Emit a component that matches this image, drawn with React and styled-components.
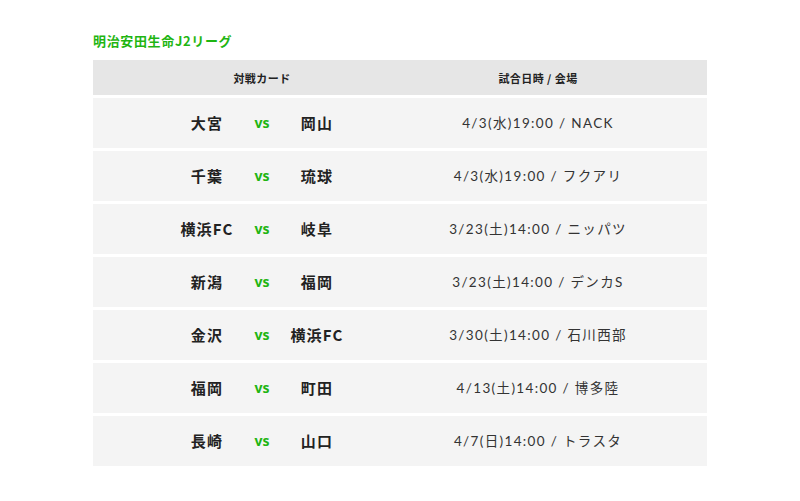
import React from 'react'
import styled, { createGlobalStyle } from 'styled-components'

const matches = [
  { home: '大宮', away: '岡山', date: '4/3(水)19:00', venue: 'NACK' },
  { home: '千葉', away: '琉球', date: '4/3(水)19:00', venue: 'フクアリ' },
  { home: '横浜FC', away: '岐阜', date: '3/23(土)14:00', venue: 'ニッパツ' },
  { home: '新潟', away: '福岡', date: '3/23(土)14:00', venue: 'デンカS' },
  { home: '金沢', away: '横浜FC', date: '3/30(土)14:00', venue: '石川西部' },
  { home: '福岡', away: '町田', date: '4/13(土)14:00', venue: '博多陸' },
  { home: '長崎', away: '山口', date: '4/7(日)14:00', venue: 'トラスタ' },
]

const GlobalStyle = createGlobalStyle`
  body {
    margin: 0;
    background: #fff;
    font-family: "Noto Sans CJK JP", "Noto Sans", sans-serif;
    color: #222;
  }
`

const App = () => {
  return (
    <>
      <GlobalStyle />
      <Page>
        <Title>明治安田生命J2リーグ</Title>
        <Table>
          <HeaderRow>
            <HeadCell>対戦カード</HeadCell>
            <HeadCell>試合日時 / 会場</HeadCell>
            <HeadCell />
          </HeaderRow>
          {matches.map((m, i) => (
            <Row key={i}>
              <CardCell>
                <Team>{m.home}</Team>
                <Vs>vs</Vs>
                <Team>{m.away}</Team>
              </CardCell>
              <DateCell>{m.date} / {m.venue}</DateCell>
              <div />
            </Row>
          ))}
        </Table>
      </Page>
    </>
  )
}

const Page = styled.div`
  padding: 31px 93px 0;
`

const Title = styled.h2`
  margin: 0 0 9px;
  font-size: 13px;
  line-height: 20px;
  font-weight: 700;
  color: #1fb512;
  letter-spacing: 0.05em;
`

const Table = styled.div`
  width: 614px;
  display: flex;
  flex-direction: column;
  gap: 3px;
`

const HeaderRow = styled.div`
  display: grid;
  grid-template-columns: 338px 214px 62px;
  height: 35px;
  align-items: center;
  background: #e6e6e6;
`

const HeadCell = styled.div`
  text-align: center;
  font-size: 11px;
  font-weight: 700;
  color: #222;
  letter-spacing: 0.04em;
`

const Row = styled.div`
  display: grid;
  grid-template-columns: 338px 214px 62px;
  height: 50px;
  align-items: center;
  background: #f4f4f4;
`

const CardCell = styled.div`
  display: flex;
  justify-content: center;
  align-items: center;
  padding-bottom: 2px;
`

const Team = styled.span`
  width: 80px;
  text-align: center;
  font-size: 15px;
  font-weight: 700;
  letter-spacing: 0.08em;
  color: #222;
`

const Vs = styled.span`
  width: 30px;
  text-align: center;
  font-size: 14px;
  font-weight: 700;
  color: #1fb512;
  font-family: "Noto Sans", sans-serif;
`

const DateCell = styled.div`
  text-align: center;
  font-family: "Lato", "Noto Sans CJK JP", sans-serif;
  font-size: 13.5px;
  letter-spacing: 0.1em;
  color: #333;
  white-space: nowrap;
  padding-bottom: 2px;
`

export default App
